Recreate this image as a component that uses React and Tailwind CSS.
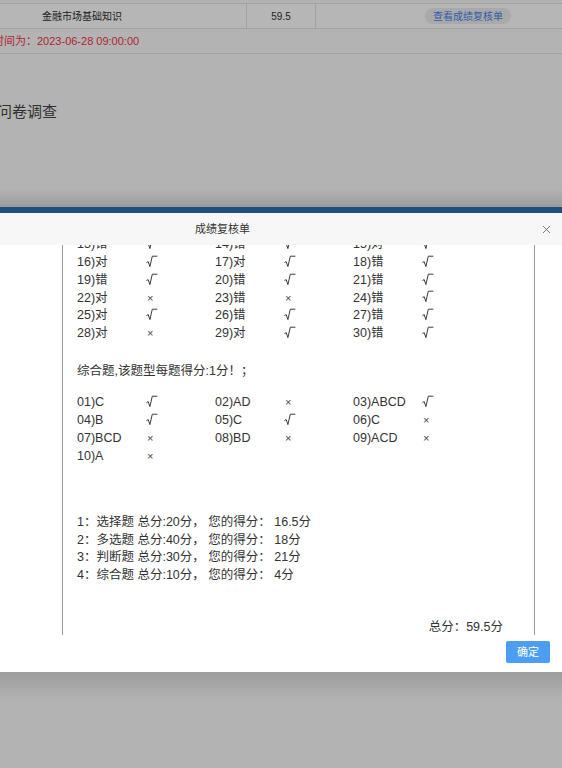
import React from "react";
import { X } from "lucide-react";

const F = "font-['Liberation_Sans','Noto_Sans_CJK_SC',sans-serif]";

const sec1 = [
  ["13)错", "√", "14)错", "√", "15)对", "√"],
  ["16)对", "√", "17)对", "√", "18)错", "√"],
  ["19)错", "√", "20)错", "√", "21)错", "√"],
  ["22)对", "×", "23)错", "×", "24)错", "√"],
  ["25)对", "√", "26)错", "√", "27)错", "√"],
  ["28)对", "×", "29)对", "√", "30)错", "√"],
];

const sec2 = [
  ["01)C", "√", "02)AD", "×", "03)ABCD", "√"],
  ["04)B", "√", "05)C", "√", "06)C", "×"],
  ["07)BCD", "×", "08)BD", "×", "09)ACD", "×"],
  ["10)A", "×"],
];

function Sqrt() {
  return (
    <svg width="12" height="13" viewBox="0 0 12 13" className="block -mt-[2px]" fill="none" stroke="#3a3a3a" strokeWidth="1" strokeLinejoin="round" strokeLinecap="round">
      <path d="M0.8 7.4 L2.2 6.6 L3.9 11.6 L6.3 1.2 L11 1.2" />
    </svg>
  );
}

function Row({ cells, h }) {
  return (
    <div className={`flex items-center ${h}`}>
      {cells.map((c, i) => (
        <div key={i} className="w-[69px] shrink-0 whitespace-nowrap flex items-center">
          {c === "√" ? <Sqrt /> : c === "×" ? <span className="text-[11px] text-[#444] pl-[1px]">×</span> : c}
        </div>
      ))}
    </div>
  );
}

export default function App() {
  return (
    <div className={`${F} w-[562px] h-[768px] overflow-hidden bg-[#b3b3b3] flex flex-col`}>
      {/* background page */}
      <div className="h-[3px] shrink-0" />
      <div className="flex h-[26px] shrink-0 border-y border-[#a2a2a2] bg-[#b6b6b6] text-[10px] text-[#222]">
        <div className="w-[247px] shrink-0 flex items-center pl-[42px] border-r border-[#a2a2a2]">金融市场基础知识</div>
        <div className="w-[69px] shrink-0 flex items-center justify-center border-r border-[#a2a2a2]">59.5</div>
        <div className="flex-1 flex items-center pl-[109px]">
          <span className="rounded-full bg-[#a9a9a9] px-[8px] h-[16px] flex items-center text-[#2d5eaa]">查看成绩复核单</span>
        </div>
      </div>
      <div className="h-[25px] shrink-0 flex items-center border-b border-[#a2a2a2] text-[11px] text-[#ad2530]">
        <span className="-ml-[7px]">时间为：2023-06-28 09:00:00</span>
      </div>
      <div className="h-[48px] shrink-0" />
      <div className="h-[20px] shrink-0 flex items-center text-[15px] text-[#303030]">
        <span className="-ml-[3px]">问卷调查</span>
      </div>
      <div className="h-[68px] shrink-0" />
      <div className="h-[17px] shrink-0 bg-gradient-to-b from-[#b2b2b2] to-[#9b9b9b]" />
      <div className="h-[6px] shrink-0 bg-[#1e4f7e]" />

      {/* modal */}
      <div className="h-[459px] shrink-0 bg-white flex flex-col">
        <div className="h-[32px] shrink-0 bg-[#f7f7f7] flex items-center text-[11px] text-[#333] relative z-10">
          <span className="ml-[195px]">成绩复核单</span>
          <X className="ml-auto mr-[9px] text-[#555]" size={13} strokeWidth={1.4} />
        </div>
        <div className="ml-[62px] w-[473px] h-[390px] shrink-0 border-x border-[#9a9a9a] overflow-hidden text-[12.5px] text-[#333]">
          <div className="-mt-[9px] pl-[14px]">
            {sec1.map((r, i) => (
              <Row key={i} cells={r} h="h-[17.7px]" />
            ))}
            <div className="mt-[20px] h-[17.7px] flex items-center">综合题,该题型每题得分:1分！；</div>
            <div className="mt-[13.5px]">
              {sec2.map((r, i) => (
                <Row key={i} cells={r} h="h-[18px]" />
              ))}
            </div>
            <div className="mt-[48px]">
              {[
                "1：选择题 总分:20分， 您的得分： 16.5分",
                "2：多选题 总分:40分， 您的得分： 18分",
                "3：判断题 总分:30分， 您的得分： 21分",
                "4：综合题 总分:10分， 您的得分： 4分",
              ].map((t, i) => (
                <div key={i} className="h-[17.8px] flex items-center whitespace-pre">{t}</div>
              ))}
            </div>
            <div className="mt-[34px] h-[18px] flex items-center justify-end pr-[31px]">总分：59.5分</div>
          </div>
        </div>
        <div className="flex justify-end pt-[6px] pr-[12px]">
          <button className="w-[44px] h-[22px] bg-[#4b9ef2] text-white text-[11px] rounded-[2px] flex items-center justify-center">确定</button>
        </div>
      </div>

      <div className="h-[28px] shrink-0 bg-gradient-to-b from-[#9d9d9d] to-[#b3b3b3]" />
      <div className="flex-1" />
    </div>
  );
}
